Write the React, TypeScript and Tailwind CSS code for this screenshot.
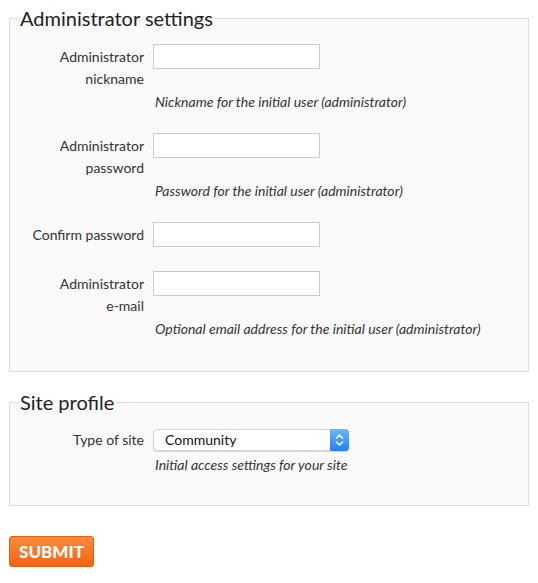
import { useState } from "react";

type Field = {
  id: string;
  label: string[];
  type: string;
  hint?: string;
  gap: string;
};

const fields: Field[] = [
  { id: "nick", label: ["Administrator", "nickname"], type: "text", hint: "Nickname for the initial user (administrator)", gap: "mb-[20px]" },
  { id: "pass", label: ["Administrator", "password"], type: "password", hint: "Password for the initial user (administrator)", gap: "mb-[20px]" },
  { id: "confirm", label: ["Confirm password"], type: "password", gap: "mb-[24px]" },
  { id: "mail", label: ["Administrator", "e-mail"], type: "email", hint: "Optional email address for the initial user (administrator)", gap: "" },
];

function SelectArrows() {
  return (
    <div className="pointer-events-none absolute right-0 top-0 flex h-full w-[19px] items-center justify-center rounded-r-[4px] bg-gradient-to-b from-[#6db4fb] to-[#1b7ffa]">
      <svg width="9" height="14" viewBox="0 0 9 14" fill="none" stroke="white" strokeWidth="1.6" strokeLinecap="round" strokeLinejoin="round">
        <path d="M1.5 5 L4.5 2 L7.5 5" />
        <path d="M1.5 9 L4.5 12 L7.5 9" />
      </svg>
    </div>
  );
}

export default function App() {
  const [values, setValues] = useState<Record<string, string>>({});
  const [site, setSite] = useState("community");

  return (
    <div className="px-[9px] pb-4 font-['Lato','Noto_Sans',sans-serif] text-[14px] text-[#333]">
      <fieldset className="mt-[6px] border border-[#dddddd] bg-[#fafafa] pl-[10px] pt-[14px] pb-[31px]">
        <legend className="px-0 text-[20px] leading-[24px] text-[#222]">Administrator settings</legend>
        {fields.map((f) => (
          <div key={f.id} className={f.gap}>
            <div className="flex items-start">
              <label htmlFor={f.id} className="w-[124px] whitespace-nowrap pt-[2px] text-right leading-[22px]">
                {f.label.map((line, i) => (
                  <span key={i} className="block">
                    {line}
                  </span>
                ))}
              </label>
              <input
                id={f.id}
                type={f.type}
                value={values[f.id] ?? ""}
                onChange={(e) => setValues({ ...values, [f.id]: e.target.value })}
                className="ml-[9px] h-[25px] w-[167px] border border-[#cccccc] bg-white px-1 outline-none"
              />
            </div>
            {f.hint && <p className="ml-[135px] mt-[1px] italic leading-[22px]">{f.hint}</p>}
          </div>
        ))}
      </fieldset>

      <fieldset className="mt-[18px] border border-[#dddddd] bg-[#fafafa] pl-[10px] pt-[15px] pb-[29px]">
        <legend className="px-0 text-[20px] leading-[24px] text-[#222]">Site profile</legend>
        <div className="flex items-start">
          <label htmlFor="site" className="w-[124px] text-right leading-[22px]">
            Type of site
          </label>
          <div className="relative ml-[9px] h-[22px] w-[196px]">
            <select
              id="site"
              value={site}
              onChange={(e) => setSite(e.target.value)}
              className="h-full w-full appearance-none rounded-[4px] border border-[#d4d4d4] bg-white pl-[11px] text-[14px] leading-[20px] text-[#111] shadow-[0_1px_1px_rgba(0,0,0,0.15)] outline-none"
            >
              <option value="community">Community</option>
              <option value="private">Private</option>
              <option value="public">Public</option>
            </select>
            <SelectArrows />
          </div>
        </div>
        <p className="ml-[135px] mt-[3px] italic leading-[22px]">Initial access settings for your site</p>
      </fieldset>

      <button className="mt-[30px] h-[31px] w-[85px] rounded-[3px] border border-[#e4600f] bg-gradient-to-b from-[#ff8a3c] to-[#f5620d] text-[17px] font-black text-white">
        SUBMIT
      </button>
    </div>
  );
}
